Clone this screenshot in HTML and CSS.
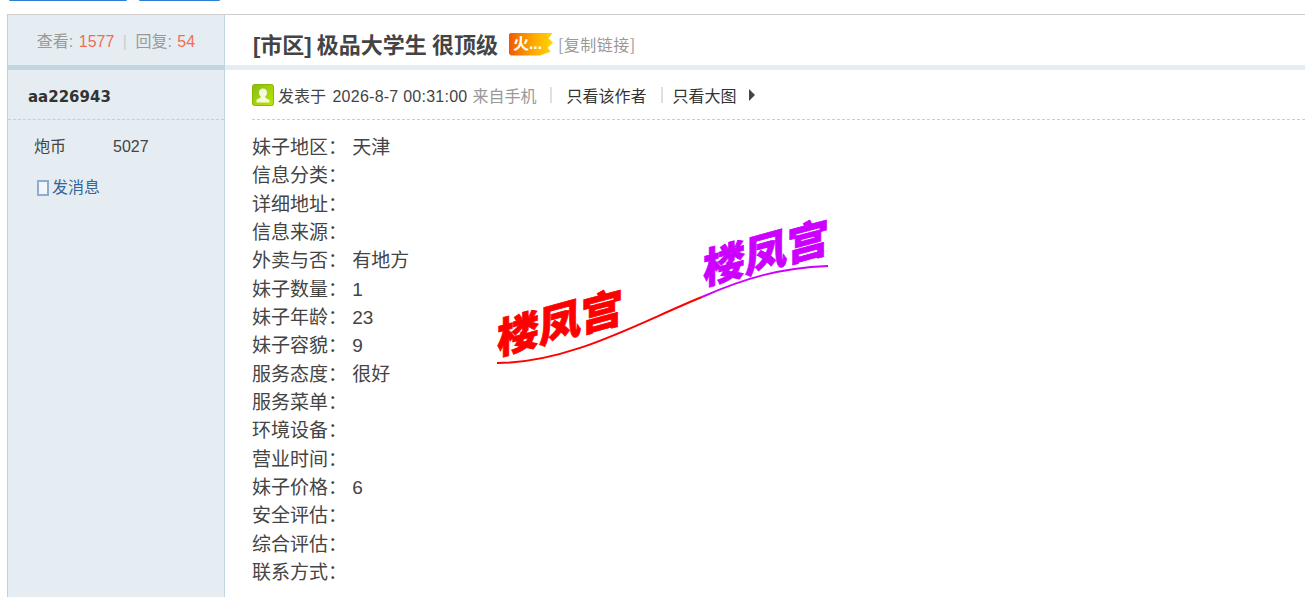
FILE: index.html
```html
<!DOCTYPE html>
<html lang="en">
<head>
    <meta charset="UTF-8">
    <meta name="viewport" content="width=device-width, initial-scale=1.0">
    <title>[市区] 极品大学生 很顶级</title>
    <link rel="stylesheet" href="styles.css">
</head>
<body>
    <div class="top-buttons">
        <span class="top-btn reply-btn"></span>
        <span class="top-btn post-btn"></span>
    </div>
    <div class="thread">
        <div class="thread-head">
            <div class="stats">
                <span>查看:</span> <em>1577</em> <i class="sep">|</i> <span>回复:</span> <em>54</em>
            </div>
            <div class="title-box">
                <h1>[市区] 极品大学生 很顶级</h1>
                <span class="hot-badge">火...</span>
                <a class="copy-link">[复制链接]</a>
            </div>
        </div>
        <div class="post">
            <div class="side">
                <div class="author">aa226943</div>
                <div class="credit"><span>炮币</span><span>5027</span></div>
                <a class="send-msg"><i class="msg-icon"></i>发消息</a>
            </div>
            <div class="main">
                <div class="post-meta">
                    <svg class="avatar-icon" width="22" height="22" viewBox="0 0 22 22">
                        <defs>
                            <linearGradient id="av" x1="0" y1="0" x2="1" y2="1">
                                <stop offset="0" stop-color="#86bb1c"/>
                                <stop offset="1" stop-color="#bde800"/>
                            </linearGradient>
                        </defs>
                        <rect x="0.5" y="0.5" width="21" height="21" rx="2" fill="url(#av)" stroke="#8ab800"/>
                        <path d="M11 4.500c2.600 0 4 2 4 4.200 0 1.600-.8 3-1.700 3.800v1.300l4.200 2.200v2.500H4.500V15.800l4.200-2.200v-1.300C7.800 11.700 7 10.300 7 8.700 7 6.500 8.400 4.500 11 4.500z" fill="#f4fbe0"/>
                    </svg>
                    <span class="posted">发表于 <span class="date">2026-8-7 00:31:00</span></span>
                    <span class="from">来自手机</span>
                    <i class="pipe"></i>
                    <a class="meta-link">只看该作者</a>
                    <i class="pipe pipe-small"></i>
                    <a class="meta-link">只看大图</a>
                    <i class="arrow"></i>
                </div>
                <div class="fields">
                    <div>妹子地区： 天津</div>
                    <div>信息分类：</div>
                    <div>详细地址：</div>
                    <div>信息来源：</div>
                    <div>外卖与否： 有地方</div>
                    <div>妹子数量： 1</div>
                    <div>妹子年龄： 23</div>
                    <div>妹子容貌： 9</div>
                    <div>服务态度： 很好</div>
                    <div>服务菜单：</div>
                    <div>环境设备：</div>
                    <div>营业时间：</div>
                    <div>妹子价格： 6</div>
                    <div>安全评估：</div>
                    <div>综合评估：</div>
                    <div>联系方式：</div>
                </div>
                <svg class="stamp" width="360" height="200" viewBox="0 -30 360 200">
                    <path d="M11 153C84 153 154 112 216 87" fill="none" stroke="#f00" stroke-width="2"/>
                    <path d="M216 87C259 68 294 58 342 56" fill="none" stroke="#c0f" stroke-width="2"/>
                    <text class="stamp-text red" transform="translate(11 145) skewY(-15)">楼凤宫</text>
                    <text class="stamp-text purple" transform="translate(217 75) skewY(-15)">楼凤宫</text>
                </svg>
            </div>
        </div>
    </div>
</body>
</html>
```

FILE: styles.css
```css
html, body {
    margin: 0;
    padding: 0;
    height: 597px;
    overflow: hidden;
    background-color: #fff;
}
body {
    font-family: "Liberation Sans", "Noto Sans CJK SC", sans-serif;
    font-size: 16px;
    color: #444;
}
.top-buttons {
    display: flex;
    gap: 12px;
    height: 14px;
    padding-left: 9px;
    box-sizing: border-box;
}
.top-btn {
    display: block;
    height: 1px;
    background-color: #2e7fd6;
    border-radius: 0 0 3px 3px;
}
.reply-btn {
    width: 118px;
}
.post-btn {
    width: 81px;
}
.thread {
    margin-left: 7px;
    border-top: 1px solid #cdcdcd;
    border-left: 1px solid #cdcdcd;
}
.thread-head {
    display: flex;
    height: 50px;
    border-bottom: 5px solid #e5edf2;
}
.stats {
    width: 217px;
    height: 55px;
    flex-shrink: 0;
    box-sizing: border-box;
    padding-top: 18px;
    text-align: center;
    background-color: #e5edf2;
    border-right: 1px solid #c2d5e3;
    border-bottom: 5px solid #c2d5e3;
    color: #999;
    line-height: 18px;
}
.stats em {
    font-style: normal;
    color: #f26c4f;
    margin-left: 1px;
}
.stats .sep {
    font-style: normal;
    color: #ccc;
    margin: 0 4px;
}
.title-box {
    display: flex;
    align-items: center;
    padding: 8px 0 0 28px;
    height: 40px;
}
.title-box h1 {
    margin: 0;
    font-size: 22px;
    font-weight: 700;
    word-spacing: -1px;
    color: #444;
}
.hot-badge {
    width: 44px;
    height: 23px;
    margin: 2px 5px 0 11px;
    padding-left: 4px;
    box-sizing: border-box;
    color: #fff;
    font-size: 16px;
    font-weight: 700;
    line-height: 22px;
    background: linear-gradient(90deg, #f05a00, #ffa800 55%, #ffd800 100%);
    clip-path: polygon(2px 0, 100% 0, 90% 26%, 100% 44%, 88% 66%, 95% 84%, 70% 100%, 2px 100%, 0 21px, 0 2px);
}
.copy-link {
    font-family: "Noto Sans CJK SC", sans-serif;
    color: #999;
    font-size: 16px;
    letter-spacing: 0.5px;
    margin-top: 2px;
}
.post {
    display: flex;
    height: 527px;
}
.side {
    width: 217px;
    flex-shrink: 0;
    box-sizing: border-box;
    background-color: #e5edf2;
    border-right: 1px solid #c2d5e3;
}
.author {
    height: 50px;
    box-sizing: border-box;
    padding: 17px 0 0 20px;
    font-family: "DejaVu Sans", sans-serif;
    font-size: 15px;
    font-weight: 700;
    line-height: 20px;
    color: #333;
    border-bottom: 1px dashed #cdcdcd;
}
.credit {
    display: flex;
    padding: 17px 0 0 26px;
    line-height: 20px;
}
.credit span:first-child {
    width: 79px;
}
.send-msg {
    display: flex;
    align-items: center;
    padding: 21px 0 0 29px;
    line-height: 20px;
    color: #369;
}
.msg-icon {
    display: block;
    width: 8px;
    height: 12px;
    margin-right: 3px;
    border: 2px solid #8cacd4;
    background-color: #f3f7fb;
}
.main {
    position: relative;
    flex: 1;
    min-width: 0;
    padding-left: 27px;
}
.post-meta {
    display: flex;
    align-items: center;
    height: 49px;
    border-bottom: 1px dashed #cdcdcd;
}
.avatar-icon {
    margin-right: 4px;
}
.posted {
    margin-right: 5px;
}
.date {
    margin-left: 2px;
    letter-spacing: 0.25px;
}
.from {
    color: #999;
}
.pipe {
    width: 2px;
    height: 16px;
    margin: 0 15px 0 13px;
    background-color: #d8e2ea;
}
.pipe-small {
    margin: 0 10px 0 14px;
}
.meta-link {
    color: #333;
}
.arrow {
    width: 0;
    height: 0;
    margin-left: 12px;
    border-left: 6px solid #444;
    border-top: 6px solid transparent;
    border-bottom: 6px solid transparent;
}
.fields {
    padding-top: 14px;
    font-size: 19px;
    line-height: 28.33px;
}
.stamp {
    position: absolute;
    left: 261px;
    top: 110px;
}
.stamp-text {
    font-family: "Noto Sans CJK SC", sans-serif;
    font-size: 42px;
    font-weight: 900;
    stroke-width: 0.8;
}
.red {
    fill: #f00;
    stroke: #f00;
}
.purple {
    fill: #c0f;
    stroke: #c0f;
}
```
